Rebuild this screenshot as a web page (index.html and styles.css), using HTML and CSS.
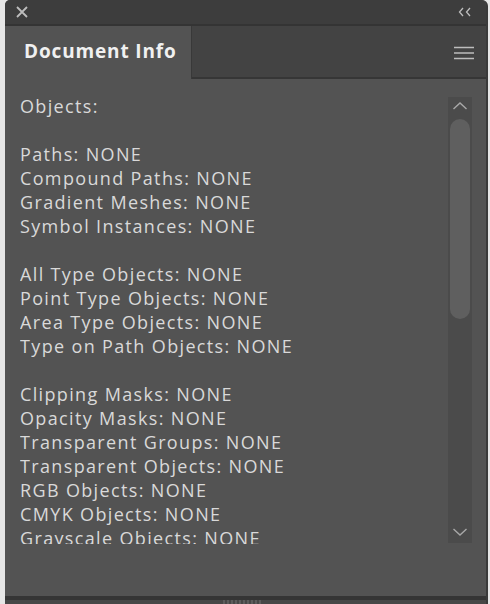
FILE: index.html
```html
<!DOCTYPE html>
<html>
<head>
<meta charset="utf-8">
<link rel="stylesheet" href="styles.css">
</head>
<body>
<div class="panel">
  <div class="titlebar">
    <svg class="close" width="14" height="14" viewBox="0 0 14 14"><path d="M2 2 L12 12 M12 2 L2 12" stroke="#bdbdbd" stroke-width="1.8" fill="none"/></svg>
    <svg class="collapse" width="14" height="10" viewBox="0 0 14 10"><path d="M5 1 L1.5 5 L5 9 M12 1 L8.5 5 L12 9" stroke="#bdbdbd" stroke-width="1.3" fill="none"/></svg>
  </div>
  <div class="tabs">
    <div class="tab">Document Info</div>
    <div class="tabrest">
      <svg class="menu" width="20" height="14" viewBox="0 0 20 14"><path d="M0 1.5 H20 M0 7 H20 M0 12.5 H20" stroke="#bdbdbd" stroke-width="1.5" fill="none"/></svg>
    </div>
  </div>
  <div class="content">
    <div class="list">
      <div>Objects:</div>
      <div class="gap"></div>
      <div>Paths: NONE</div>
      <div>Compound Paths: NONE</div>
      <div>Gradient Meshes: NONE</div>
      <div>Symbol Instances: NONE</div>
      <div class="gap"></div>
      <div>All Type Objects: NONE</div>
      <div>Point Type Objects: NONE</div>
      <div>Area Type Objects: NONE</div>
      <div>Type on Path Objects: NONE</div>
      <div class="gap"></div>
      <div>Clipping Masks: NONE</div>
      <div>Opacity Masks: NONE</div>
      <div>Transparent Groups: NONE</div>
      <div>Transparent Objects: NONE</div>
      <div>RGB Objects: NONE</div>
      <div>CMYK Objects: NONE</div>
      <div>Grayscale Objects: NONE</div>
    </div>
    <div class="scrollbar">
      <svg class="arrow" width="16" height="10" viewBox="0 0 16 10"><path d="M1.5 8 L8 2 L14.5 8" stroke="#a8a8a8" stroke-width="1.4" fill="none"/></svg>
      <div class="thumb"></div>
      <div class="spacer"></div>
      <svg class="arrow" width="16" height="10" viewBox="0 0 16 10"><path d="M1.5 2 L8 8 L14.5 2" stroke="#a8a8a8" stroke-width="1.4" fill="none"/></svg>
    </div>
  </div>
  <div class="bottombar"></div>
  <div class="grip"><span></span><span></span><span></span><span></span><span></span><span></span><span></span><span></span><span></span><span></span></div>
</div>
</body>
</html>
```

FILE: styles.css
```css
html, body {
  margin: 0;
  padding: 0;
  background: #e6e6e6;
  width: 490px;
  height: 604px;
  overflow: hidden;
}
.panel {
  margin-left: 5px;
  width: 481px;
  height: 604px;
  background: #535353;
  border-right: 2px solid #3a3a3a;
  border-radius: 5px 6px 0 0;
  display: flex;
  flex-direction: column;
  overflow: hidden;
  font-family: "Open Sans", "Noto Sans", sans-serif;
}
.titlebar {
  height: 24px;
  flex: none;
  background: #3d3d3d;
  border-bottom: 2px solid #343434;
  display: flex;
  align-items: center;
  justify-content: space-between;
  padding: 0 14px 0 10px;
}
.close { display: block; }
.collapse { display: block; }
.tabs {
  height: 53px;
  flex: none;
  display: flex;
}
.tab {
  width: 187px;
  background: #535353;
  color: #f0f0f0;
  font-weight: 700;
  font-size: 19px;
  letter-spacing: 0.85px;
  box-sizing: border-box;
  padding: 12px 0 0 19px;
  border-right: 1px solid #393939;
}
.tabrest {
  flex: 1;
  background: #434343;
  border-bottom: 2px solid #363636;
  display: flex;
  justify-content: flex-end;
  align-items: flex-start;
  padding: 20px 12px 0 0;
}
.menu { display: block; }
.content {
  flex: 1;
  display: flex;
  padding: 15px 14px 0 15px;
  min-height: 0;
}
.list {
  flex: 1;
  height: 450px;
  overflow: hidden;
  color: #d9d9d9;
  font-size: 18px;
  letter-spacing: 1.35px;
  line-height: 24px;
}
.gap { height: 24px; }
.scrollbar {
  width: 24px;
  height: 446px;
  margin-top: 3px;
  background: #4b4b4b;
  display: flex;
  flex-direction: column;
  align-items: center;
}
.arrow { display: block; margin-top: 4px; flex: none; }
.scrollbar .arrow:last-child { margin: 0 0 6px; }
.thumb {
  margin-top: 8px;
  width: 20px;
  height: 200px;
  border-radius: 10px;
  background: #5f5f5f;
  flex: none;
}
.spacer { flex: 1; }
.bottombar {
  height: 4px;
  flex: none;
  background: #353535;
}
.grip {
  height: 4px;
  flex: none;
  background: #474747;
  display: flex;
  justify-content: center;
  gap: 2px;
  padding-right: 8px;
}
.grip span {
  width: 2px;
  height: 4px;
  background: #5c5c5c;
}
```
